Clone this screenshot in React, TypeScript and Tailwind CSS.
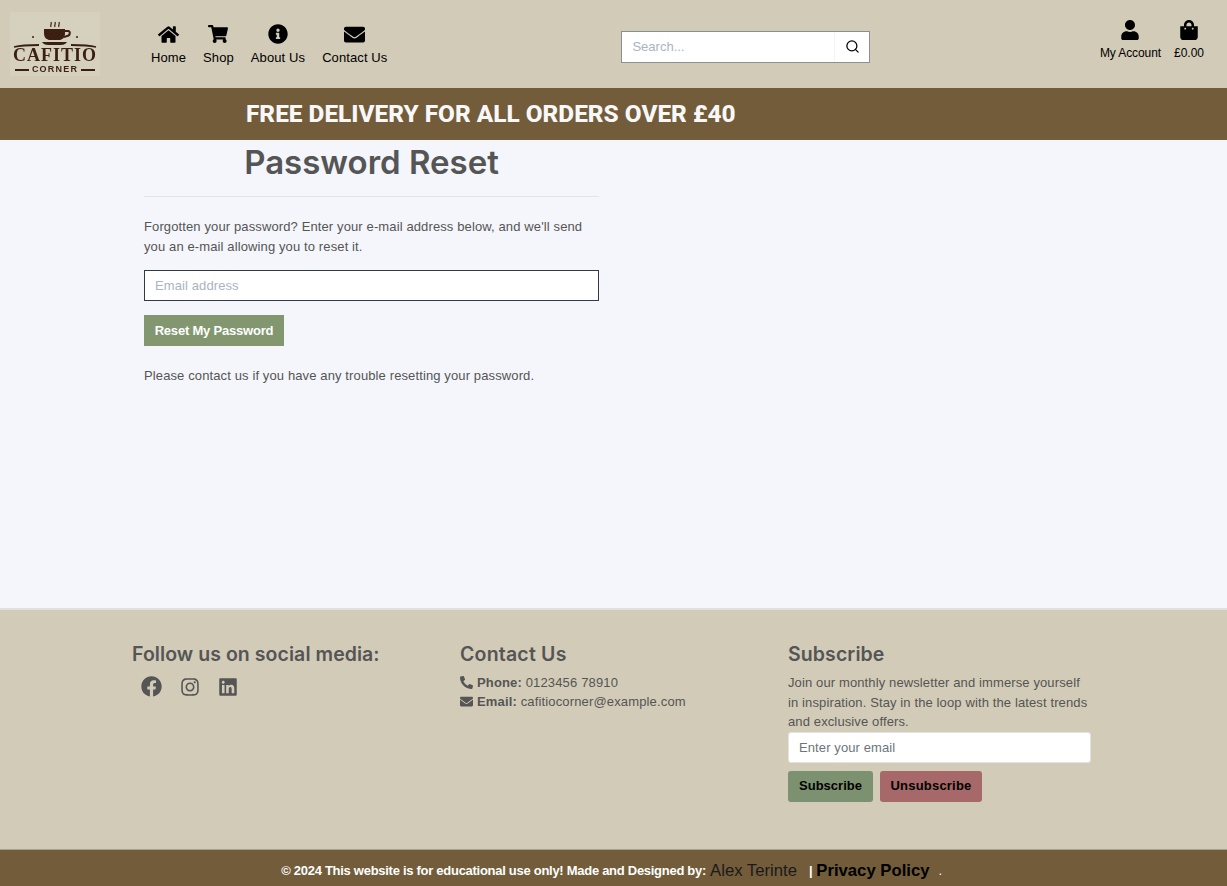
import { FaHome, FaShoppingCart, FaInfoCircle, FaEnvelope, FaUser, FaShoppingBag, FaPhoneAlt, FaFacebook, FaInstagram, FaLinkedin } from 'react-icons/fa';
import { Search } from 'lucide-react';

const navItems = [
  { label: 'Home', icon: FaHome, size: 21 },
  { label: 'Shop', icon: FaShoppingCart, size: 20 },
  { label: 'About Us', icon: FaInfoCircle, size: 20 },
  { label: 'Contact Us', icon: FaEnvelope, size: 21 },
];

function Logo() {
  return (
    <div className="w-[90px] h-[64px] bg-[#d6d0bf] flex flex-col items-center text-[#3b1f10] blur-[0.3px]">
      <svg width="90" height="36" viewBox="0 0 90 36" className="shrink-0">
        <path d="M41 15c-1-2 1-3 0-5M45 15c-1-2 1-3 0-5M49 15c-1-2 1-3 0-5" stroke="#3b1f10" strokeWidth="1.2" fill="none" />
        <path d="M34 17h21v4c0 5-3 7-6 7h-9c-3 0-6-2-6-7z" fill="#3b1f10" />
        <path d="M55 19h3c3 0 2 5-1 5l-3 1" stroke="#3b1f10" strokeWidth="2" fill="none" />
        <path d="M32 30h25c-2 3-5 3-8 3h-9c-3 0-6 0-8-3z" fill="#3b1f10" />
        <path d="M4 35c8-2 16-2 25-2M86 35c-8-2-16-2-25-2" stroke="#3b1f10" strokeWidth="1.8" fill="none" />
        <circle cx="23" cy="25" r="1" fill="#3b1f10" />
        <circle cx="67" cy="25" r="1" fill="#3b1f10" />
      </svg>
      <span className="font-['Liberation_Serif',serif] font-bold text-[18px] leading-[15px] tracking-[1px]">CAFITIO</span>
      <div className="flex items-center gap-[3px] mt-[2px]">
        <span className="w-[14px] h-[2px] bg-[#3b1f10]" />
        <span className="font-['Liberation_Sans',sans-serif] font-bold text-[9px] leading-[9px] tracking-[1.2px]">CORNER</span>
        <span className="w-[14px] h-[2px] bg-[#3b1f10]" />
      </div>
    </div>
  );
}

export default function App() {
  return (
    <div className="min-h-[886px] flex flex-col bg-[#f4f6fb] font-['Liberation_Sans',Arial,sans-serif] text-[#555555]">
      {/* Шапка */}
      <header className="h-[88px] bg-[#d2cbb7] flex items-center pl-[10px] pr-[23px]">
        <Logo />
        <nav className="flex ml-[51px] gap-[17px] self-start pt-[22px]">
          {navItems.map((item) => (
            <a key={item.label} className="flex flex-col items-center text-black text-[13px] leading-[20px] tracking-[0.1px]">
              <span className="h-[24px] flex items-center justify-center">
                <item.icon size={item.size} />
              </span>
              <span className="mt-[2px]">{item.label}</span>
            </a>
          ))}
        </nav>
        <form className="flex w-[249px] h-[32px] ml-[234px] mt-[5px] border border-[#8a8f96] bg-white">
          <input placeholder="Search..." className="flex-1 min-w-0 px-[10px] text-[13px] outline-none placeholder:text-[#a9b4c2]" />
          <button type="button" className="w-[35px] flex items-center justify-center border-l border-[#f5f5f5] text-black">
            <Search size={15} strokeWidth={2} />
          </button>
        </form>
        <div className="ml-auto flex gap-[13px] self-start pt-[20px] text-black text-[12px] leading-[18px]">
          <a className="flex flex-col items-center">
            <FaUser size={20} />
            <span className="mt-[4px] tracking-[-0.1px]">My Account</span>
          </a>
          <a className="flex flex-col items-center">
            <FaShoppingBag size={20} />
            <span className="mt-[4px]">£0.00</span>
          </a>
        </div>
      </header>

      {/* Баннер */}
      <div className="h-[52px] bg-[#735c3a] flex items-center pl-[246px]">
        <h4 className="font-['Roboto',sans-serif] font-extrabold text-[24.4px] text-[#f8f8f8]">FREE DELIVERY FOR ALL ORDERS OVER £40</h4>
      </div>

      {/* Основной контент */}
      <main className="h-[468px] pl-[144px]">
        <div className="w-[455px]">
          <h1 className="font-['Inter',sans-serif] font-semibold text-[33px] leading-[47px] text-center -mt-[1px]">Password Reset</h1>
          <hr className="mt-[10px] border-[#e1e4ea]" />
          <p className="mt-[20px] text-[13px] leading-[20px] tracking-[0.12px]">
            Forgotten your password? Enter your e-mail address below, and we'll send you an e-mail allowing you to reset it.
          </p>
          <input placeholder="Email address" className="mt-[13px] block w-full h-[31px] px-[10px] bg-white border border-[#333a44] text-[13px] tracking-[0.1px] outline-none placeholder:text-[#a9b4c2]" />
          <button type="button" className="mt-[14px] block h-[31px] w-[140px] bg-[#82976f] text-white text-[13px] font-bold tracking-[-0.2px]">Reset My Password</button>
          <p className="mt-[20px] text-[13px] leading-[20px] tracking-[0.12px]">Please contact us if you have any trouble resetting your password.</p>
        </div>
      </main>

      {/* Подвал */}
      <footer className="h-[241px] bg-[#d2cbb7] border-t-2 border-[#e0e0dc] pl-[132px] pt-[30px] grid grid-cols-[328px_328px_303px] items-start">
        <div>
          <h4 className="font-['Inter',sans-serif] font-semibold text-[19.5px] leading-[28px] tracking-[0.06px]">Follow us on social media:</h4>
          <div className="flex items-center mt-[8px] ml-[9px] gap-[18px]">
            <FaFacebook size={21} />
            <FaInstagram size={20} />
            <FaLinkedin size={20} />
          </div>
        </div>
        <div>
          <h4 className="font-['Inter',sans-serif] font-semibold text-[19.5px] leading-[28px] tracking-[0.2px]">Contact Us</h4>
          <p className="mt-[5px] text-[13px] leading-[19px] tracking-[0.15px] flex items-center gap-[4px]">
            <FaPhoneAlt size={13} />
            <span><strong>Phone:</strong> 0123456 78910</span>
          </p>
          <p className="text-[13px] leading-[19px] tracking-[0.15px] flex items-center gap-[4px]">
            <FaEnvelope size={13} />
            <span><strong>Email:</strong> cafitiocorner@example.com</span>
          </p>
        </div>
        <div>
          <h4 className="font-['Inter',sans-serif] font-semibold text-[19.5px] leading-[28px] tracking-[0.1px]">Subscribe</h4>
          <p className="mt-[5px] text-[13px] leading-[19.5px] tracking-[0.12px]">
            Join our monthly newsletter and immerse yourself in inspiration. Stay in the loop with the latest trends and exclusive offers.
          </p>
          <input placeholder="Enter your email" className="block w-full h-[31px] px-[10px] bg-white border border-[#e3e3e3] rounded-[3px] text-[13px] tracking-[0.1px] outline-none placeholder:text-[#6c757d]" />
          <div className="flex gap-[7px] mt-[8px]">
            <button type="button" className="h-[31px] w-[85px] bg-[#7c916f] rounded-[3px] text-black text-[13px] font-bold">Subscribe</button>
            <button type="button" className="h-[31px] w-[102px] bg-[#a66868] rounded-[3px] text-black text-[13px] font-bold tracking-[0.2px]">Unsubscribe</button>
          </div>
        </div>
      </footer>

      <div className="h-[37px] bg-[#735c3a] border-t border-[#a8a390] flex items-center justify-center pt-[6px] text-[13px] tracking-[-0.28px] text-white font-bold pr-[4px]">
        <span>© 2024 This website is for educational use only! Made and Designed by:</span>
        <span className="ml-[4px] text-[16.7px] tracking-normal font-normal text-[#1a1a1a]">Alex Terinte</span>
        <span className="ml-[12px]">|</span>
        <span className="ml-[4px] text-[16.7px] tracking-normal text-black">Privacy Policy</span>
        <span className="ml-[9px] font-normal">.</span>
      </div>
    </div>
  );
}
